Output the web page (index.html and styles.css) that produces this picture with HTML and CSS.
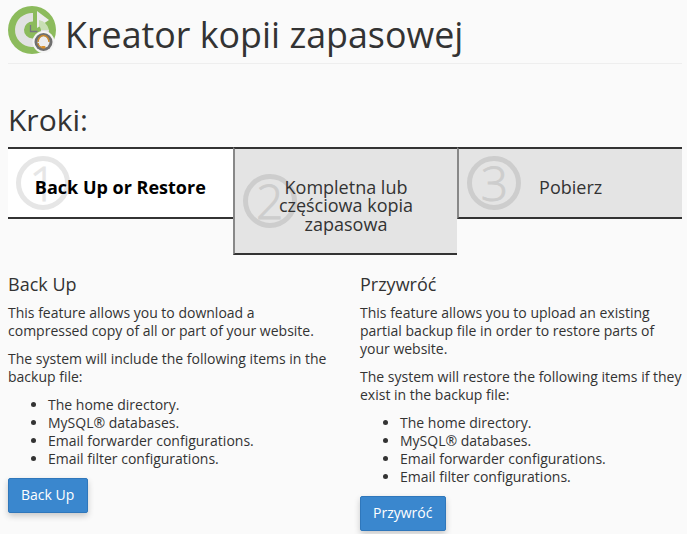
FILE: index.html
```
<!DOCTYPE html>
<html lang="pl">
<head>
<meta charset="utf-8">
<title>Kreator kopii zapasowej</title>
<link rel="stylesheet" href="styles.css">
</head>
<body>
<header class="page-header">
  <svg class="logo" width="48" height="48" viewBox="0 0 48 48">
    <circle cx="24" cy="24" r="24" fill="#8cbb5c"/>
    <path d="M25 7A17 17 0 1 0 41 24H33A8.500 8.500 0 1 1 25 15.500Z" fill="#e2e2e2"/>
    <path d="M29 5L41 14L29 22Z" fill="#ececec"/>
    <path d="M31 14A13 13 0 0 1 41 24H33A8 8 0 0 0 31 20Z" fill="#c9dfb4"/>
    <path d="M22.500 19V25.500H29.500" fill="none" stroke="#77757f" stroke-width="1.300"/>
    <circle cx="35.500" cy="36" r="11" fill="#f4f4f4"/>
    <circle cx="35.500" cy="36" r="9" fill="#6f6f6f"/>
    <circle cx="35.500" cy="36" r="6" fill="#ededed"/>
    <path d="M30 36A5.500 6.500 0 0 1 41 36" fill="none" stroke="#c98a2e" stroke-width="1.500"/>
    <path d="M30 37A5.500 5 0 0 0 35.500 41.500" fill="none" stroke="#c98a2e" stroke-width="1.500"/>
    <rect x="33.500" y="40" width="4" height="2.500" rx="1" fill="#d9902b"/>
  </svg>
  <h1 class="page-title">Kreator kopii zapasowej</h1>
</header>

<h2 class="steps-title">Kroki:</h2>
<ol class="steps">
  <li class="step step-active"><span class="step-number">1</span><span class="step-label">Back Up or Restore</span></li>
  <li class="step step-tall"><span class="step-number">2</span><span class="step-label">Kompletna lub częściowa kopia zapasowa</span></li>
  <li class="step"><span class="step-number">3</span><span class="step-label">Pobierz</span></li>
</ol>

<main class="columns">
  <section class="column">
    <h3 class="column-title">Back Up</h3>
    <p>This feature allows you to download a compressed copy of all or part of your website.</p>
    <p>The system will include the following items in the backup file:</p>
    <ul class="items">
      <li>The home directory.</li>
      <li>MySQL® databases.</li>
      <li>Email forwarder configurations.</li>
      <li>Email filter configurations.</li>
    </ul>
    <button class="btn" type="button">Back Up</button>
  </section>
  <section class="column">
    <h3 class="column-title">Przywróć</h3>
    <p>This feature allows you to upload an existing partial backup file in order to restore parts of your website.</p>
    <p>The system will restore the following items if they exist in the backup file:</p>
    <ul class="items">
      <li>The home directory.</li>
      <li>MySQL® databases.</li>
      <li>Email forwarder configurations.</li>
      <li>Email filter configurations.</li>
    </ul>
    <button class="btn" type="button">Przywróć</button>
  </section>
</main>
</body>
</html>
```
FILE: styles.css
```
* { box-sizing: border-box; }
html, body { height: 100%; }
body {
  margin: 0;
  padding: 0 5px 0 8px;
  background: #fafafa;
  color: #333;
  font-family: "Open Sans", "Liberation Sans", sans-serif;
  font-size: 14px;
  line-height: 18px;
  overflow: hidden;
}
.page-header {
  display: flex;
  align-items: flex-start;
  gap: 9px;
  height: 64px;
  padding-top: 6px;
  border-bottom: 1px solid #eee;
}
.logo { flex: none; }
.page-title {
  margin: 0;
  font-size: 35.800px;
  font-weight: 400;
  line-height: 56px;
}
.steps-title {
  margin: 39px 0 0;
  height: 44px;
  font-size: 30px;
  font-weight: 400;
  line-height: 34px;
}
.steps {
  display: grid;
  grid-template-columns: repeat(3, 1fr);
  align-items: start;
  margin: 0;
  padding: 0;
  list-style: none;
}
.step {
  position: relative;
  min-height: 72px;
  padding: 29px 40px 20px;
  background: #e4e4e4;
  border-top: 2px solid #333;
  border-bottom: 2px solid #333;
  border-left: 2px solid #888;
  text-align: center;
  font-size: 18px;
  line-height: 18.400px;
}
.step-active {
  background: #fff;
  border-left: 0;
  color: #000;
  font-weight: 700;
  padding-left: 20px;
  padding-right: 20px;
}
.step-number {
  position: absolute;
  left: 8px;
  top: 50%;
  width: 54px;
  height: 54px;
  margin-top: -27px;
  border: 5px solid #cdcdcd;
  border-radius: 50%;
  color: #cdcdcd;
  font-size: 48px;
  font-weight: 300;
  line-height: 44px;
  text-align: center;
  -webkit-text-stroke: 0.800px #cdcdcd;
}
.step-active .step-number {
  border-color: #e6e6e6;
  color: #e6e6e6;
  -webkit-text-stroke-color: #e6e6e6;
}
.step-label { position: relative; }
.columns {
  display: grid;
  grid-template-columns: 1fr 1fr;
  gap: 30px;
  margin-top: 18px;
}
.column-title {
  margin: 0 0 9px;
  font-size: 18px;
  font-weight: 400;
  line-height: 22px;
}
.column p { margin: 0 0 10px; }
.items {
  margin: 0 0 10px;
  padding-left: 40px;
}
.btn {
  display: block;
  height: 35px;
  padding: 0 13px 2px 12px;
  background: #3a87ce;
  border: 1px solid #2f77bb;
  border-radius: 2px;
  box-shadow: 0 3px 6px rgba(0, 0, 0, 0.2);
  color: #fff;
  font: 400 14px/18px "Open Sans", "Liberation Sans", sans-serif;
}
```
